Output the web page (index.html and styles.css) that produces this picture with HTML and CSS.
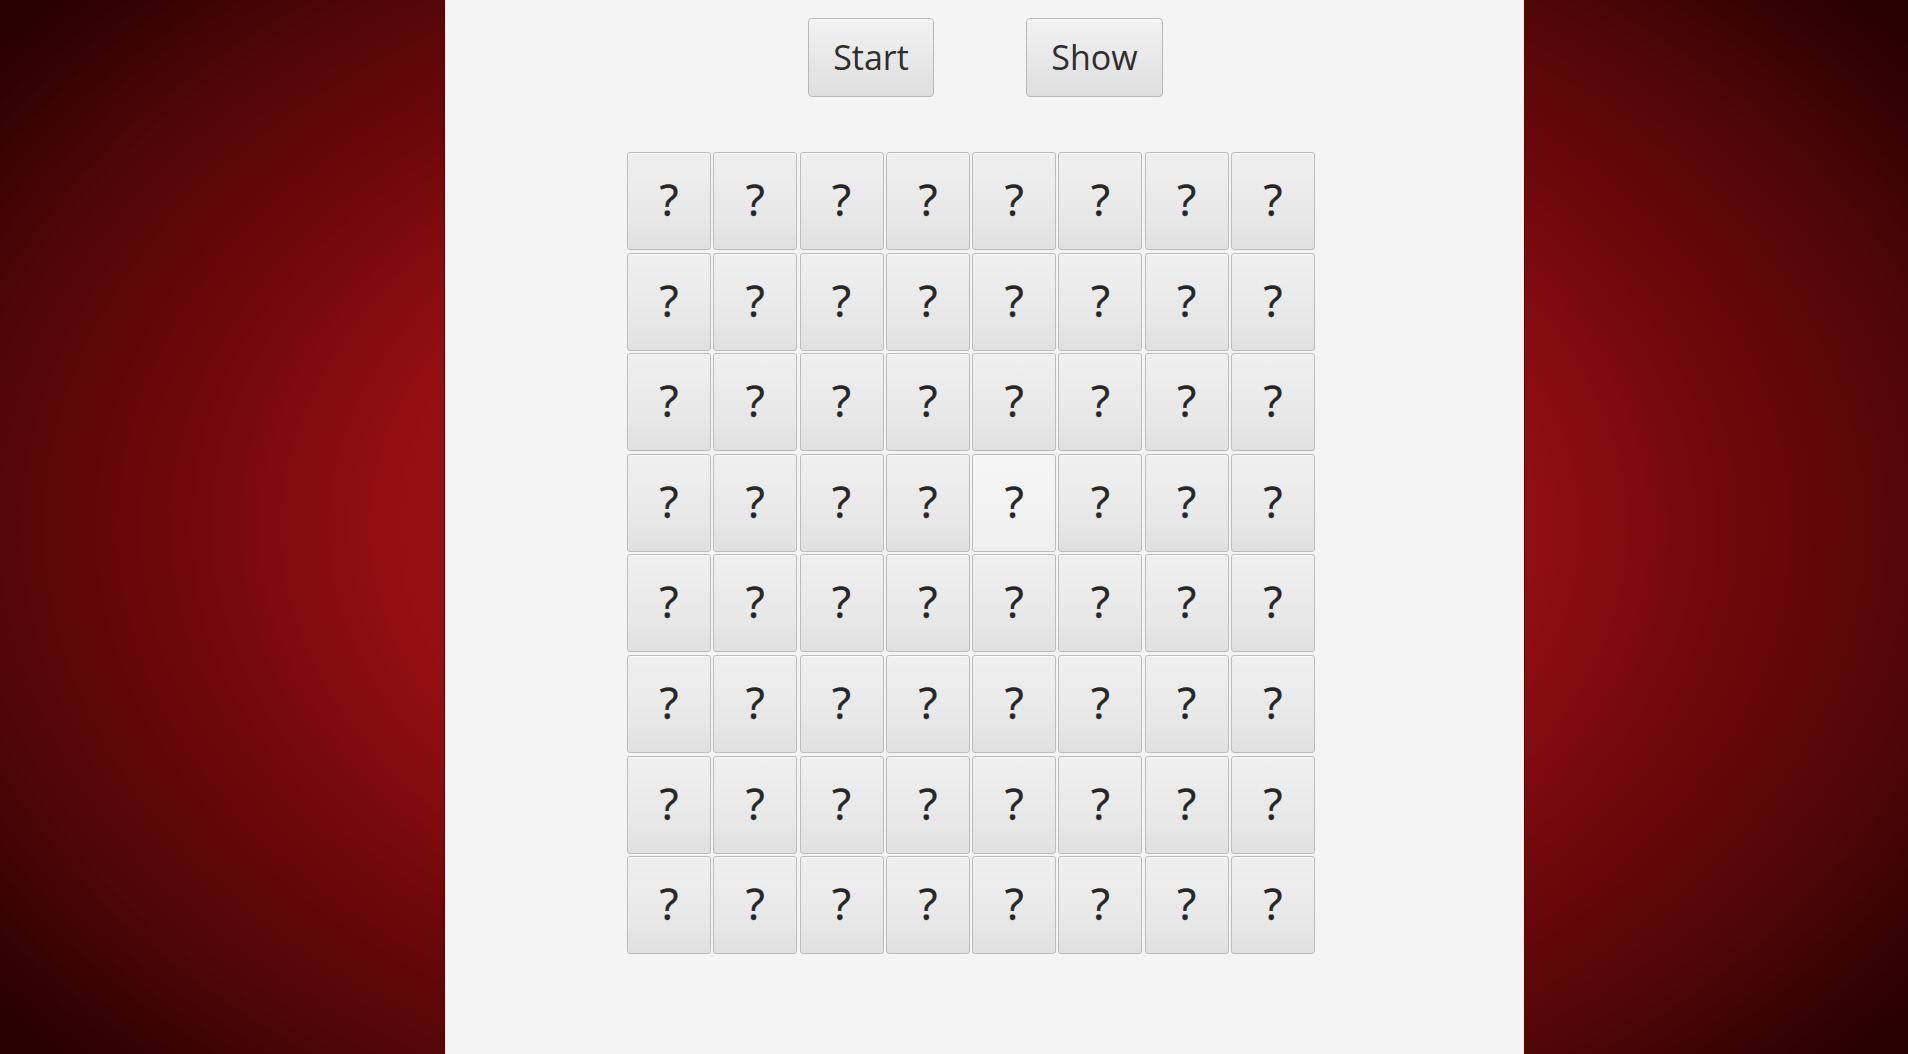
FILE: index.html
```html
<!DOCTYPE html>
<html>
<head>
<meta charset="utf-8">
<link rel="stylesheet" href="styles.css">
</head>
<body>
<div class="stage">
  <main class="panel">
    <div class="toolbar">
      <button class="btn btn-start">Start</button>
      <button class="btn btn-show">Show</button>
    </div>
    <div class="board">
      <button class="cell">?</button><button class="cell">?</button><button class="cell">?</button><button class="cell">?</button><button class="cell">?</button><button class="cell">?</button><button class="cell">?</button><button class="cell">?</button>
      <button class="cell">?</button><button class="cell">?</button><button class="cell">?</button><button class="cell">?</button><button class="cell">?</button><button class="cell">?</button><button class="cell">?</button><button class="cell">?</button>
      <button class="cell">?</button><button class="cell">?</button><button class="cell">?</button><button class="cell">?</button><button class="cell">?</button><button class="cell">?</button><button class="cell">?</button><button class="cell">?</button>
      <button class="cell">?</button><button class="cell">?</button><button class="cell">?</button><button class="cell">?</button><button class="cell cell-hover">?</button><button class="cell">?</button><button class="cell">?</button><button class="cell">?</button>
      <button class="cell">?</button><button class="cell">?</button><button class="cell">?</button><button class="cell">?</button><button class="cell">?</button><button class="cell">?</button><button class="cell">?</button><button class="cell">?</button>
      <button class="cell">?</button><button class="cell">?</button><button class="cell">?</button><button class="cell">?</button><button class="cell">?</button><button class="cell">?</button><button class="cell">?</button><button class="cell">?</button>
      <button class="cell">?</button><button class="cell">?</button><button class="cell">?</button><button class="cell">?</button><button class="cell">?</button><button class="cell">?</button><button class="cell">?</button><button class="cell">?</button>
      <button class="cell">?</button><button class="cell">?</button><button class="cell">?</button><button class="cell">?</button><button class="cell">?</button><button class="cell">?</button><button class="cell">?</button><button class="cell">?</button>
    </div>
  </main>
</div>
</body>
</html>
```

FILE: styles.css
```css
html, body {
  margin: 0;
  padding: 0;
  width: 1908px;
  height: 1054px;
  overflow: hidden;
}

.stage {
  width: 1908px;
  height: 1054px;
  display: flex;
  background: radial-gradient(ellipse 1300px 860px at 50% 50%,
    #9e1115 0%,
    #970f12 42%,
    #6e080a 60%,
    #500607 76%,
    #2e0102 90%,
    #1e0000 100%);
}

.panel {
  margin-left: 446px;
  width: 1077px;
  height: 1054px;
  background: #f4f4f4;
  box-shadow: -1px 0 0 #f7e6e6, 1px 0 0 #f7e6e6, -2px 0 0 #5a0608, 2px 0 0 #5a0608;
  display: flex;
  flex-direction: column;
  font-family: "Open Sans", "Noto Sans", "Liberation Sans", sans-serif;
}

.toolbar {
  display: flex;
  gap: 92px;
  padding-top: 18px;
  padding-left: 362px;
}

.btn {
  height: 79px;
  border: 1px solid #b8b8b8;
  border-radius: 4px;
  background: linear-gradient(#f3f3f3, #e6e6e6 60%, #dfdfdf);
  box-shadow: inset 0 1px 0 #fbfbfb;
  color: #2e2e2e;
  font-family: "Open Sans", "Noto Sans", "Liberation Sans", sans-serif;
  font-size: 34px;
  padding: 0 0 2px 0;
  line-height: 1;
}

.btn-start { width: 126px; }
.btn-show { width: 137px; }

.board {
  margin-top: 55px;
  margin-left: 181px;
  display: grid;
  grid-template-columns: repeat(8, 84px);
  grid-auto-rows: 98px;
  column-gap: 2.3px;
  row-gap: 2.6px;
  width: max-content;
}

.cell {
  width: 84px;
  height: 98px;
  border: 1px solid #bcbcbc;
  border-radius: 3px;
  background: linear-gradient(#f0f0f0, #e7e7e7 70%, #e0e0e0);
  box-shadow: inset 0 1px 0 #f8f8f8;
  color: #262626;
  font-family: "Open Sans", "Noto Sans", "Liberation Sans", sans-serif;
  font-size: 44px;
  line-height: 1;
  padding: 0 0 4px 0;
  -webkit-text-stroke: 0.4px #262626;
}

.cell-hover {
  background: linear-gradient(#f6f6f6, #efefef);
}
```
